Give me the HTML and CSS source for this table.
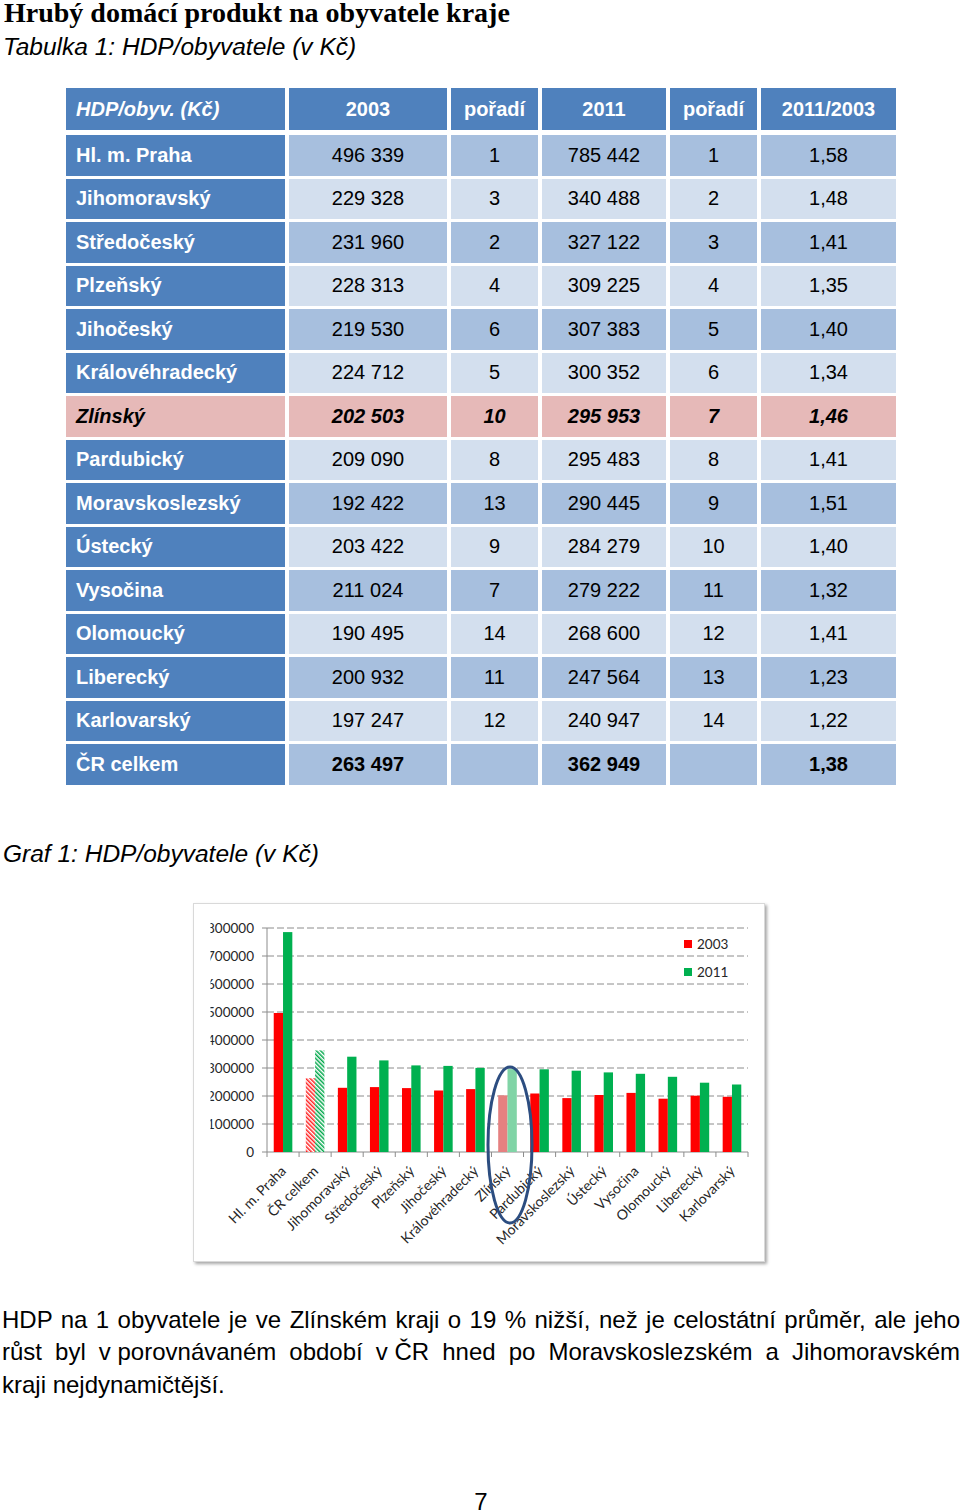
FILE: index.html
```html
<!DOCTYPE html>
<html lang="cs">
<head>
<meta charset="utf-8">
<title>Hrubý domácí produkt na obyvatele kraje</title>
<link rel="stylesheet" href="styles.css">
</head>
<body>
<div class="page">
  <h1 class="title">Hrubý domácí produkt na obyvatele kraje</h1>
  <p class="caption caption-table">Tabulka 1: HDP/obyvatele (v Kč)</p>

  <div class="hdp-table">
    <div class="cell head name"><em>HDP/obyv. (Kč)</em></div>
    <div class="cell head">2003</div>
    <div class="cell head">pořadí</div>
    <div class="cell head">2011</div>
    <div class="cell head">pořadí</div>
    <div class="cell head">2011/2003</div>

    <div class="cell name">Hl. m. Praha</div><div class="cell dark">496 339</div><div class="cell dark">1</div><div class="cell dark">785 442</div><div class="cell dark">1</div><div class="cell dark">1,58</div>
    <div class="cell name">Jihomoravský</div><div class="cell light">229 328</div><div class="cell light">3</div><div class="cell light">340 488</div><div class="cell light">2</div><div class="cell light">1,48</div>
    <div class="cell name">Středočeský</div><div class="cell dark">231 960</div><div class="cell dark">2</div><div class="cell dark">327 122</div><div class="cell dark">3</div><div class="cell dark">1,41</div>
    <div class="cell name">Plzeňský</div><div class="cell light">228 313</div><div class="cell light">4</div><div class="cell light">309 225</div><div class="cell light">4</div><div class="cell light">1,35</div>
    <div class="cell name">Jihočeský</div><div class="cell dark">219 530</div><div class="cell dark">6</div><div class="cell dark">307 383</div><div class="cell dark">5</div><div class="cell dark">1,40</div>
    <div class="cell name">Královéhradecký</div><div class="cell light">224 712</div><div class="cell light">5</div><div class="cell light">300 352</div><div class="cell light">6</div><div class="cell light">1,34</div>
    <div class="cell name hl">Zlínský</div><div class="cell hl">202 503</div><div class="cell hl">10</div><div class="cell hl">295 953</div><div class="cell hl">7</div><div class="cell hl">1,46</div>
    <div class="cell name">Pardubický</div><div class="cell light">209 090</div><div class="cell light">8</div><div class="cell light">295 483</div><div class="cell light">8</div><div class="cell light">1,41</div>
    <div class="cell name">Moravskoslezský</div><div class="cell dark">192 422</div><div class="cell dark">13</div><div class="cell dark">290 445</div><div class="cell dark">9</div><div class="cell dark">1,51</div>
    <div class="cell name">Ústecký</div><div class="cell light">203 422</div><div class="cell light">9</div><div class="cell light">284 279</div><div class="cell light">10</div><div class="cell light">1,40</div>
    <div class="cell name">Vysočina</div><div class="cell dark">211 024</div><div class="cell dark">7</div><div class="cell dark">279 222</div><div class="cell dark">11</div><div class="cell dark">1,32</div>
    <div class="cell name">Olomoucký</div><div class="cell light">190 495</div><div class="cell light">14</div><div class="cell light">268 600</div><div class="cell light">12</div><div class="cell light">1,41</div>
    <div class="cell name">Liberecký</div><div class="cell dark">200 932</div><div class="cell dark">11</div><div class="cell dark">247 564</div><div class="cell dark">13</div><div class="cell dark">1,23</div>
    <div class="cell name">Karlovarský</div><div class="cell light">197 247</div><div class="cell light">12</div><div class="cell light">240 947</div><div class="cell light">14</div><div class="cell light">1,22</div>
    <div class="cell name">ČR celkem</div><div class="cell dark total">263 497</div><div class="cell dark"></div><div class="cell dark total">362 949</div><div class="cell dark"></div><div class="cell dark total">1,38</div>
  </div>

  <p class="caption caption-chart">Graf 1: HDP/obyvatele (v Kč)</p>

  <div class="chart">
    <svg class="chart-svg" width="570" height="357" viewBox="0 0 570 357" xmlns="http://www.w3.org/2000/svg">
      <defs>
        <pattern id="hatchRed" width="3" height="3" patternUnits="userSpaceOnUse" patternTransform="rotate(-45)">
          <rect width="3" height="3" fill="#ffffff"/>
          <rect width="1.5" height="3" fill="#ff2020"/>
        </pattern>
        <pattern id="hatchGreen" width="3" height="3" patternUnits="userSpaceOnUse" patternTransform="rotate(-45)">
          <rect width="3" height="3" fill="#ffffff"/>
          <rect width="1.5" height="3" fill="#00a84a"/>
        </pattern>
        <clipPath id="labelClip"><rect x="16.5" y="0" width="60" height="357"/></clipPath>
      </defs>

      <g class="grid">
        <line x1="73" y1="220" x2="554" y2="220"/>
        <line x1="73" y1="192" x2="554" y2="192"/>
        <line x1="73" y1="164" x2="554" y2="164"/>
        <line x1="73" y1="136" x2="554" y2="136"/>
        <line x1="73" y1="108" x2="554" y2="108"/>
        <line x1="73" y1="80" x2="554" y2="80"/>
        <line x1="73" y1="52" x2="554" y2="52"/>
        <line x1="73" y1="24" x2="554" y2="24"/>
      </g>

      <g class="axis">
        <line x1="73" y1="24" x2="73" y2="248"/>
        <line x1="73" y1="248" x2="554" y2="248"/>
        <line x1="68" y1="248" x2="73" y2="248"/>
        <line x1="68" y1="220" x2="73" y2="220"/>
        <line x1="68" y1="192" x2="73" y2="192"/>
        <line x1="68" y1="164" x2="73" y2="164"/>
        <line x1="68" y1="136" x2="73" y2="136"/>
        <line x1="68" y1="108" x2="73" y2="108"/>
        <line x1="68" y1="80" x2="73" y2="80"/>
        <line x1="68" y1="52" x2="73" y2="52"/>
        <line x1="68" y1="24" x2="73" y2="24"/>
        <line x1="73" y1="248" x2="73" y2="253"/>
        <line x1="105.07" y1="248" x2="105.07" y2="253"/>
        <line x1="137.13" y1="248" x2="137.13" y2="253"/>
        <line x1="169.2" y1="248" x2="169.2" y2="253"/>
        <line x1="201.27" y1="248" x2="201.27" y2="253"/>
        <line x1="233.33" y1="248" x2="233.33" y2="253"/>
        <line x1="265.4" y1="248" x2="265.4" y2="253"/>
        <line x1="297.47" y1="248" x2="297.47" y2="253"/>
        <line x1="329.53" y1="248" x2="329.53" y2="253"/>
        <line x1="361.6" y1="248" x2="361.6" y2="253"/>
        <line x1="393.67" y1="248" x2="393.67" y2="253"/>
        <line x1="425.73" y1="248" x2="425.73" y2="253"/>
        <line x1="457.8" y1="248" x2="457.8" y2="253"/>
        <line x1="489.87" y1="248" x2="489.87" y2="253"/>
        <line x1="521.93" y1="248" x2="521.93" y2="253"/>
        <line x1="554" y1="248" x2="554" y2="253"/>
      </g>

      <g class="ylabels" clip-path="url(#labelClip)">
        <text x="60" y="252.5">0</text>
        <text x="60" y="224.5">100000</text>
        <text x="60" y="196.5">200000</text>
        <text x="60" y="168.5">300000</text>
        <text x="60" y="140.5">400000</text>
        <text x="60" y="112.5">500000</text>
        <text x="60" y="84.5">600000</text>
        <text x="60" y="56.5">700000</text>
        <text x="60" y="28.5">800000</text>
      </g>

      <g class="bars">
        <rect class="r" x="79.73" y="109" width="9.3" height="139"/>
        <rect class="g" x="89.03" y="28.1" width="9.3" height="219.9"/>
        <rect fill="url(#hatchRed)" x="111.8" y="174.2" width="9.3" height="73.8"/>
        <rect fill="url(#hatchGreen)" x="121.1" y="146.4" width="9.3" height="101.6"/>
        <rect class="r" x="143.87" y="183.8" width="9.3" height="64.2"/>
        <rect class="g" x="153.17" y="152.7" width="9.3" height="95.3"/>
        <rect class="r" x="175.93" y="183.1" width="9.3" height="64.9"/>
        <rect class="g" x="185.23" y="156.4" width="9.3" height="91.6"/>
        <rect class="r" x="208" y="184.1" width="9.3" height="63.9"/>
        <rect class="g" x="217.3" y="161.4" width="9.3" height="86.6"/>
        <rect class="r" x="240.07" y="186.5" width="9.3" height="61.5"/>
        <rect class="g" x="249.37" y="161.9" width="9.3" height="86.1"/>
        <rect class="r" x="272.13" y="185.1" width="9.3" height="62.9"/>
        <rect class="g" x="281.43" y="163.9" width="9.3" height="84.1"/>
        <rect class="rf" x="304.2" y="191.3" width="9.3" height="56.7"/>
        <rect class="gf" x="313.5" y="165.1" width="9.3" height="82.9"/>
        <rect class="r" x="336.27" y="189.5" width="9.3" height="58.5"/>
        <rect class="g" x="345.57" y="165.3" width="9.3" height="82.7"/>
        <rect class="r" x="368.33" y="194.1" width="9.3" height="53.9"/>
        <rect class="g" x="377.63" y="166.7" width="9.3" height="81.3"/>
        <rect class="r" x="400.4" y="191" width="9.3" height="57"/>
        <rect class="g" x="409.7" y="168.4" width="9.3" height="79.6"/>
        <rect class="r" x="432.47" y="188.9" width="9.3" height="59.1"/>
        <rect class="g" x="441.77" y="169.8" width="9.3" height="78.2"/>
        <rect class="r" x="464.53" y="194.7" width="9.3" height="53.3"/>
        <rect class="g" x="473.83" y="172.8" width="9.3" height="75.2"/>
        <rect class="r" x="496.6" y="191.7" width="9.3" height="56.3"/>
        <rect class="g" x="505.9" y="178.7" width="9.3" height="69.3"/>
        <rect class="r" x="528.67" y="192.8" width="9.3" height="55.2"/>
        <rect class="g" x="537.97" y="180.5" width="9.3" height="67.5"/>
      </g>

      <g class="legend">
        <rect class="r" x="490" y="36" width="8" height="8"/>
        <text x="503" y="45">2003</text>
        <rect class="g" x="490" y="64" width="8" height="8"/>
        <text x="503" y="73">2011</text>
      </g>

      <g class="xlabels">
        <text transform="translate(93 268) rotate(-45)">Hl. m. Praha</text>
        <text transform="translate(125.1 268) rotate(-45)">ČR celkem</text>
        <text transform="translate(157.17 268) rotate(-45)">Jihomoravský</text>
        <text transform="translate(189.23 268) rotate(-45)">Středočeský</text>
        <text transform="translate(221.3 268) rotate(-45)">Plzeňský</text>
        <text transform="translate(253.37 268) rotate(-45)">Jihočeský</text>
        <text transform="translate(285.43 268) rotate(-45)">Královéhradecký</text>
        <text transform="translate(317.5 268) rotate(-45)">Zlínský</text>
        <text transform="translate(349.57 268) rotate(-45)">Pardubický</text>
        <text transform="translate(381.63 268) rotate(-45)">Moravskoslezský</text>
        <text transform="translate(413.7 268) rotate(-45)">Ústecký</text>
        <text transform="translate(445.77 268) rotate(-45)">Vysočina</text>
        <text transform="translate(477.83 268) rotate(-45)">Olomoucký</text>
        <text transform="translate(509.9 268) rotate(-45)">Liberecký</text>
        <text transform="translate(541.97 268) rotate(-45)">Karlovarský</text>
      </g>

      <ellipse class="mark" cx="316" cy="241" rx="22" ry="78"/>
    </svg>
  </div>

  <p class="text"><span class="line">HDP na 1 obyvatele je ve Zlínském kraji o 19 % nižší, než je celostátní průměr, ale jeho</span><span class="line">růst byl <span class="nb">v porovnávaném</span> období <span class="nb">v ČR</span> hned po Moravskoslezském a Jihomoravském</span><span class="line last">kraji nejdynamičtější.</span></p>

  <div class="pagenum">7</div>
</div>
</body>
</html>
```

FILE: styles.css
```css
html, body {
  margin: 0;
  padding: 0;
  background: #ffffff;
}

.page {
  width: 958px;
  padding: 0 0 0 2px;
  font-family: "Liberation Sans", Arial, sans-serif;
  color: #000;
}

.title {
  margin: 0 0 0 2px;
  font-family: "Liberation Serif", "Times New Roman", serif;
  font-weight: bold;
  font-size: 28px;
  line-height: 26px;
  color: #000;
}

.caption {
  margin: 0;
  font-style: italic;
  font-size: 24.5px;
  line-height: 28px;
  padding-left: 1px;
}

.caption-table {
  margin-top: 7px;
}

.hdp-table {
  margin: 27px 0 0 64px;
  display: grid;
  grid-template-columns: 219px 158px 87px 124px 87px 135px;
  grid-template-rows: 44px repeat(15, 40.5px);
  column-gap: 4px;
  row-gap: 3px;
}

.cell {
  display: flex;
  align-items: center;
  justify-content: center;
  font-size: 20px;
  color: #000;
  white-space: nowrap;
}

.cell.head {
  height: 42px;
  align-self: start;
  background: #4f81bd;
  color: #fff;
  font-weight: bold;
}

.cell.name {
  justify-content: flex-start;
  padding-left: 10px;
  background: #4f81bd;
  color: #fff;
  font-weight: bold;
}

.cell.dark {
  background: #a7bfde;
}

.cell.light {
  background: #d3dfee;
}

.cell.hl {
  background: #e6b9b8;
  color: #000;
  font-weight: bold;
  font-style: italic;
}

.cell.total {
  font-weight: bold;
}

.caption-chart {
  margin-top: 55px;
}

.chart {
  margin: 35px 0 0 191px;
  width: 572px;
  height: 359px;
  box-sizing: border-box;
  border: 1px solid #d9d9d9;
  box-shadow: 2px 2px 3px rgba(0, 0, 0, 0.35);
  background: #fff;
}

.chart-svg {
  display: block;
}

.grid line {
  stroke: #8c8c8c;
  stroke-width: 1;
  stroke-dasharray: 7 3;
}

.axis line {
  stroke: #8c8c8c;
  stroke-width: 1;
}

.ylabels text {
  font-family: Lato, "Open Sans", sans-serif;
  font-size: 13.5px;
  fill: #262626;
  text-anchor: end;
}

.xlabels text {
  font-family: Lato, "Open Sans", sans-serif;
  font-size: 14px;
  fill: #262626;
  text-anchor: end;
}

.legend text {
  font-family: Lato, "Open Sans", sans-serif;
  font-size: 13.5px;
  fill: #262626;
}

.r { fill: #ff0000; }
.g { fill: #00b050; }
.rf { fill: #e58080; }
.gf { fill: #80d4a6; }

.mark {
  fill: none;
  stroke: #2c4d80;
  stroke-width: 3;
}

.text {
  margin: 42px 0 0 0;
  font-size: 24px;
  line-height: 32.5px;
}

.line {
  display: block;
  text-align: justify;
  text-align-last: justify;
}

.line.last {
  text-align: left;
  text-align-last: left;
}

.nb {
  display: inline-block;
}

.pagenum {
  margin-top: 87px;
  text-align: center;
  font-size: 24px;
  line-height: 28px;
}
```
